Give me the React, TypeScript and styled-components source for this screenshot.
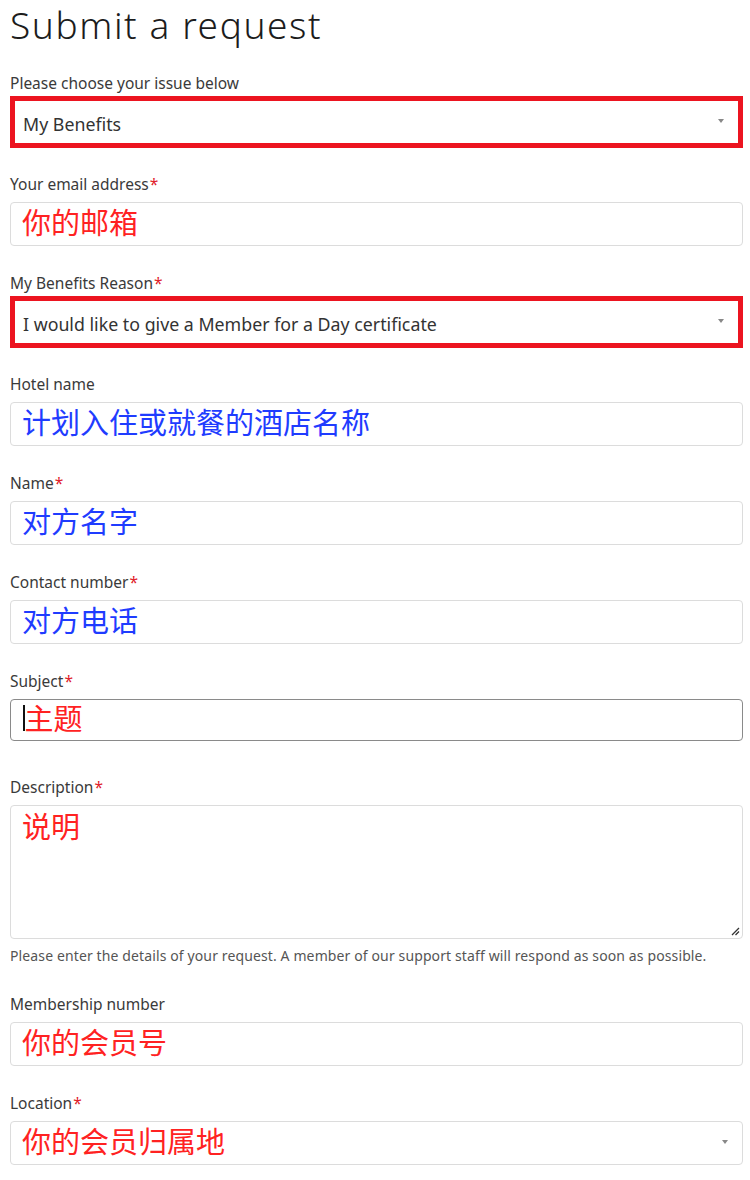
import styled, { createGlobalStyle } from 'styled-components';

const GlobalStyle = createGlobalStyle`
  html, body {
    margin: 0;
    padding: 0;
    background: #ffffff;
  }
  body {
    font-family: 'Noto Sans', 'Noto Sans CJK SC', sans-serif;
    color: #333333;
  }
`;

const S = {
  Page: styled.div`
    width: 750px;
    padding: 0 7px 0 10px;
    box-sizing: border-box;
  `,
  Title: styled.h1`
    margin: 0;
    font-size: 37px;
    line-height: 50px;
    font-weight: 300;
    color: #1c1c1c;
    letter-spacing: 1.6px;
  `,
  Form: styled.div`
    display: flex;
    flex-direction: column;
    margin-top: 23px;
  `,
  Field: styled.div<{ $extra?: number }>`
    display: flex;
    flex-direction: column;
    margin-bottom: ${({ $extra }) => 27 + ($extra || 0)}px;
  `,
  Label: styled.label`
    font-size: 15.5px;
    line-height: 20px;
    color: #3a3a3a;
    margin-bottom: 8px;
  `,
  Star: styled.span`
    color: #e0202a;
    margin-left: 1px;
  `,
  Box: styled.div<{ $highlight?: boolean; $focus?: boolean; $tall?: boolean }>`
    position: relative;
    display: flex;
    align-items: ${({ $tall }) => ($tall ? 'flex-start' : 'center')};
    box-sizing: border-box;
    height: ${({ $highlight, $tall, $focus }) =>
      $tall ? '134px' : $highlight ? '52px' : $focus ? '42px' : '44px'};
    margin: ${({ $highlight }) => ($highlight ? '-5px 0 -1px' : '0')};
    padding: ${({ $highlight, $tall }) =>
      $tall ? '2px 12px' : $highlight ? '0 8px' : '0 12px'};
    border: ${({ $highlight, $focus }) =>
      $highlight ? '5px solid #ec1420' : $focus ? '1px solid #8a8a8a' : '1px solid #dcdcdc'};
    border-radius: ${({ $highlight }) => ($highlight ? '0' : '4px')};
    background: #ffffff;
  `,
  Value: styled.span`
    font-size: 17.8px;
    padding-top: 4px;
    color: #333333;
  `,
  Hint: styled.span<{ $color: string }>`
    font-family: 'Noto Sans CJK SC', sans-serif;
    font-size: 29px;
    line-height: 34px;
    padding-bottom: 6px;
    margin-left: -1px;
    color: ${({ $color }) => $color};
  `,
  Caret: styled.span`
    display: inline-block;
    width: 1.5px;
    height: 26px;
    background: #111111;
    margin-right: 1px;
    margin-bottom: 4px;
  `,
  Arrow: styled.span`
    position: absolute;
    right: 14px;
    top: 50%;
    margin-top: -3px;
    width: 0;
    height: 0;
    border-left: 3.5px solid transparent;
    border-right: 3.5px solid transparent;
    border-top: 4px solid #888888;
  `,
  Resize: styled.svg`
    position: absolute;
    right: 2px;
    bottom: 2px;
  `,
  Help: styled.p`
    margin: 8px 0 0;
    font-size: 14px;
    line-height: 17px;
    letter-spacing: 0.12px;
    color: #555555;
  `,
};

const RED = '#ff2222';
const BLUE = '#1f3cff';

interface IFieldProps {
  label: string;
  required?: boolean;
  children: React.ReactNode;
  help?: string;
  extra?: number;
}

const Field = ({ label, required, children, help, extra }: IFieldProps) => (
  <S.Field $extra={extra}>
    <S.Label>
      {label}
      {required && <S.Star>*</S.Star>}
    </S.Label>
    {children}
    {help && <S.Help>{help}</S.Help>}
  </S.Field>
);

const App = () => {
  return (
    <S.Page>
      <GlobalStyle />
      <S.Title>Submit a request</S.Title>
      <S.Form>
        <Field label="Please choose your issue below">
          <S.Box $highlight>
            <S.Value>My Benefits</S.Value>
            <S.Arrow />
          </S.Box>
        </Field>
        <Field label="Your email address" required>
          <S.Box>
            <S.Hint $color={RED}>你的邮箱</S.Hint>
          </S.Box>
        </Field>
        <Field label="My Benefits Reason" required>
          <S.Box $highlight>
            <S.Value>I would like to give a Member for a Day certificate</S.Value>
            <S.Arrow />
          </S.Box>
        </Field>
        <Field label="Hotel name">
          <S.Box>
            <S.Hint $color={BLUE}>计划入住或就餐的酒店名称</S.Hint>
          </S.Box>
        </Field>
        <Field label="Name" required>
          <S.Box>
            <S.Hint $color={BLUE}>对方名字</S.Hint>
          </S.Box>
        </Field>
        <Field label="Contact number" required>
          <S.Box>
            <S.Hint $color={BLUE}>对方电话</S.Hint>
          </S.Box>
        </Field>
        <Field label="Subject" required extra={9}>
          <S.Box $focus>
            <S.Caret />
            <S.Hint $color={RED}>主题</S.Hint>
          </S.Box>
        </Field>
        <Field
          label="Description"
          required
          extra={3}
          help="Please enter the details of your request. A member of our support staff will respond as soon as possible."
        >
          <S.Box $tall>
            <S.Hint $color={RED}>说明</S.Hint>
            <S.Resize width="9" height="9" viewBox="0 0 9 9">
              <path d="M8 1 L1 8 M8 4.5 L4.5 8" stroke="#333" strokeWidth="1.3" />
            </S.Resize>
          </S.Box>
        </Field>
        <Field label="Membership number">
          <S.Box>
            <S.Hint $color={RED}>你的会员号</S.Hint>
          </S.Box>
        </Field>
        <Field label="Location" required>
          <S.Box>
            <S.Hint $color={RED}>你的会员归属地</S.Hint>
            <S.Arrow />
          </S.Box>
        </Field>
      </S.Form>
    </S.Page>
  );
};

export default App;
